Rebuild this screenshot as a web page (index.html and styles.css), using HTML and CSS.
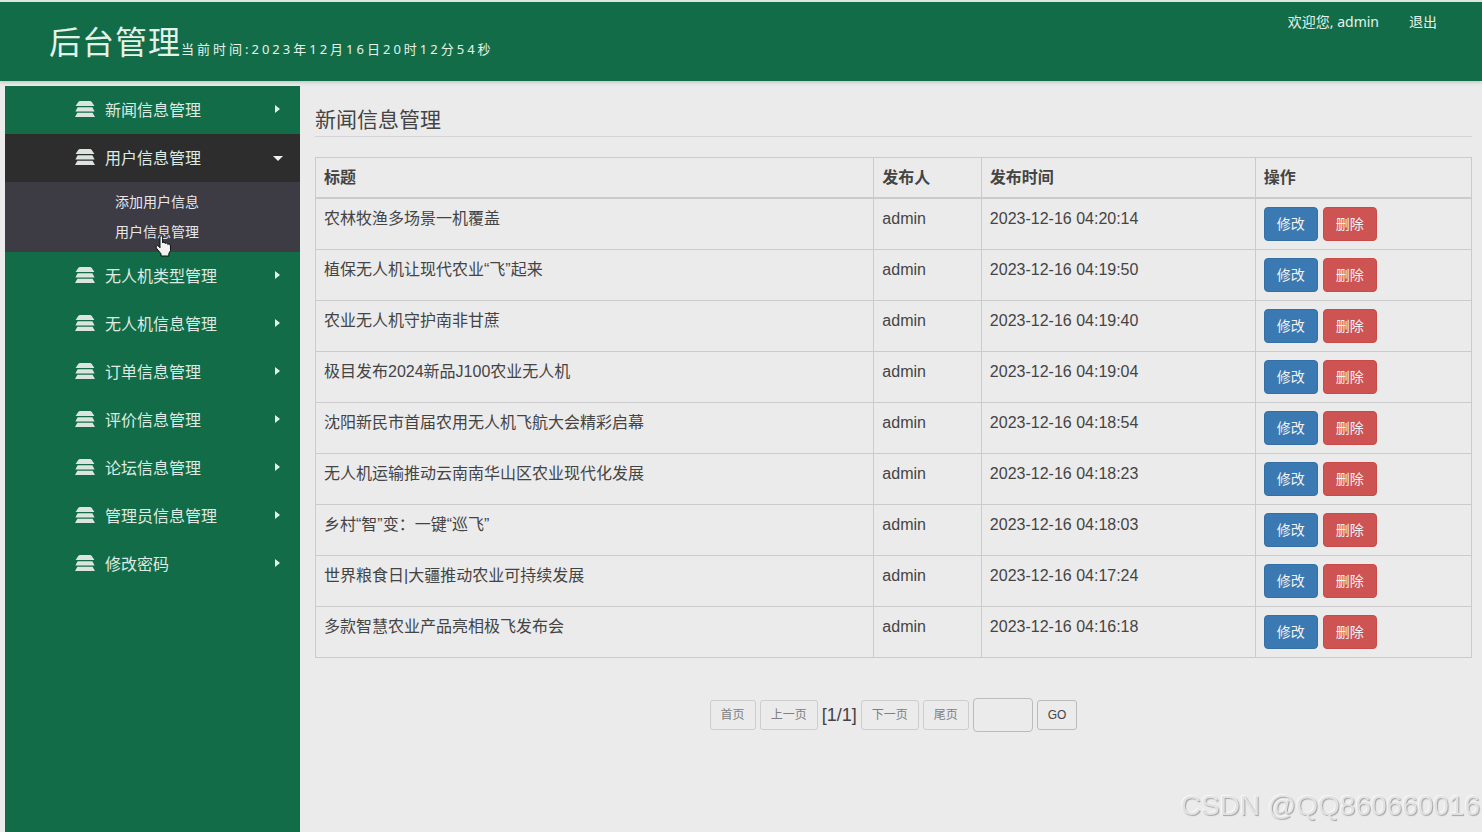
FILE: index.html
```html
<!DOCTYPE html>
<html lang="zh-CN">
<head>
  <meta charset="UTF-8">
  <meta name="viewport" content="width=device-width, initial-scale=1">
  <title>后台管理</title>
  <link rel="stylesheet" href="styles.css">
</head>
<body>

<svg class="defs" aria-hidden="true">
  <symbol id="stack" viewBox="0 0 20 16">
    <path d="M5 0h10Q16 0 16.600 .8L19.400 5H.6L3.400 .8Q4 0 5 0z M2.600 6.200h14.800L19.600 10.500H.4z M2.400 11.800h15.200L20 16H0z"/>
  </symbol>
</svg>

<header class="header">
  <h1 class="brand">后台管理</h1>
  <span class="clock">当前时间:2023年12月16日20时12分54秒</span>
  <div class="account">
    <span>欢迎您, admin</span>
    <a href="#">退出</a>
  </div>
</header>

<div class="layout">
  <nav class="sidebar">
    <ul class="menu">
      <li><a class="menu-item" href="#"><svg class="icon"><use href="#stack"/></svg>新闻信息管理<i class="caret"></i></a></li>
      <li>
        <a class="menu-item open" href="#"><svg class="icon"><use href="#stack"/></svg>用户信息管理<i class="caret"></i></a>
        <ul class="submenu">
          <li><a href="#">添加用户信息</a></li>
          <li>
            <a href="#">用户信息管理</a>
            <svg class="pointer" viewBox="0 0 17 22" aria-hidden="true">
              <path d="M5 2.2Q5 .8 6.3 .8T7.6 2.2V8Q8 7 9 7.2T10.2 8.6Q10.7 7.7 11.7 8T12.8 9.5Q13.3 8.8 14.3 9.2T15.5 11V15.5L13.8 18.5V21H6V18.8L1.3 13Q.6 11.8 1.6 11T3.6 11.3L5 12.8z"/>
            </svg>
          </li>
        </ul>
      </li>
      <li><a class="menu-item" href="#"><svg class="icon"><use href="#stack"/></svg>无人机类型管理<i class="caret"></i></a></li>
      <li><a class="menu-item" href="#"><svg class="icon"><use href="#stack"/></svg>无人机信息管理<i class="caret"></i></a></li>
      <li><a class="menu-item" href="#"><svg class="icon"><use href="#stack"/></svg>订单信息管理<i class="caret"></i></a></li>
      <li><a class="menu-item" href="#"><svg class="icon"><use href="#stack"/></svg>评价信息管理<i class="caret"></i></a></li>
      <li><a class="menu-item" href="#"><svg class="icon"><use href="#stack"/></svg>论坛信息管理<i class="caret"></i></a></li>
      <li><a class="menu-item" href="#"><svg class="icon"><use href="#stack"/></svg>管理员信息管理<i class="caret"></i></a></li>
      <li><a class="menu-item" href="#"><svg class="icon"><use href="#stack"/></svg>修改密码<i class="caret"></i></a></li>
    </ul>
  </nav>

  <main class="content">
    <h2 class="page-title">新闻信息管理</h2>

    <table class="news">
      <thead>
        <tr>
          <th class="col-title">标题</th>
          <th class="col-author">发布人</th>
          <th class="col-time">发布时间</th>
          <th class="col-action">操作</th>
        </tr>
      </thead>
      <tbody>
        <tr>
          <td>农林牧渔多场景一机覆盖</td>
          <td>admin</td>
          <td>2023-12-16 04:20:14</td>
          <td><div class="actions"><button class="btn edit">修改</button><button class="btn delete">删除</button></div></td>
        </tr>
        <tr>
          <td>植保无人机让现代农业“飞”起来</td>
          <td>admin</td>
          <td>2023-12-16 04:19:50</td>
          <td><div class="actions"><button class="btn edit">修改</button><button class="btn delete">删除</button></div></td>
        </tr>
        <tr>
          <td>农业无人机守护南非甘蔗</td>
          <td>admin</td>
          <td>2023-12-16 04:19:40</td>
          <td><div class="actions"><button class="btn edit">修改</button><button class="btn delete">删除</button></div></td>
        </tr>
        <tr>
          <td>极目发布2024新品J100农业无人机</td>
          <td>admin</td>
          <td>2023-12-16 04:19:04</td>
          <td><div class="actions"><button class="btn edit">修改</button><button class="btn delete">删除</button></div></td>
        </tr>
        <tr>
          <td>沈阳新民市首届农用无人机飞航大会精彩启幕</td>
          <td>admin</td>
          <td>2023-12-16 04:18:54</td>
          <td><div class="actions"><button class="btn edit">修改</button><button class="btn delete">删除</button></div></td>
        </tr>
        <tr>
          <td>无人机运输推动云南南华山区农业现代化发展</td>
          <td>admin</td>
          <td>2023-12-16 04:18:23</td>
          <td><div class="actions"><button class="btn edit">修改</button><button class="btn delete">删除</button></div></td>
        </tr>
        <tr>
          <td>乡村“智”变：一键“巡飞”</td>
          <td>admin</td>
          <td>2023-12-16 04:18:03</td>
          <td><div class="actions"><button class="btn edit">修改</button><button class="btn delete">删除</button></div></td>
        </tr>
        <tr>
          <td>世界粮食日|大疆推动农业可持续发展</td>
          <td>admin</td>
          <td>2023-12-16 04:17:24</td>
          <td><div class="actions"><button class="btn edit">修改</button><button class="btn delete">删除</button></div></td>
        </tr>
        <tr>
          <td>多款智慧农业产品亮相极飞发布会</td>
          <td>admin</td>
          <td>2023-12-16 04:16:18</td>
          <td><div class="actions"><button class="btn edit">修改</button><button class="btn delete">删除</button></div></td>
        </tr>
      </tbody>
    </table>

    <form class="pager">
      <button type="button" class="page-btn" disabled>首页</button>
      <button type="button" class="page-btn" disabled>上一页</button>
      <span>[1/1]</span>
      <button type="button" class="page-btn" disabled>下一页</button>
      <button type="button" class="page-btn" disabled>尾页</button>
      <input class="page-input" type="text" aria-label="页码">
      <button type="button" class="page-btn">GO</button>
    </form>
  </main>
</div>

<div class="watermark">CSDN @QQ860660016</div>

</body>
</html>
```
FILE: styles.css
```css
* {
  box-sizing: border-box;
  margin: 0;
  padding: 0;
}

body {
  display: flex;
  flex-direction: column;
  min-height: 100vh;
  font-family: "Liberation Sans", "Noto Sans CJK SC", sans-serif;
  font-size: 16px;
  line-height: 23px;
  color: #444;
  background-color: #ebebec;
}

ul {
  list-style: none;
}

a {
  color: inherit;
  text-decoration: none;
}

.defs {
  position: absolute;
  width: 0;
  height: 0;
}

/* header */
.header {
  display: flex;
  align-items: baseline;
  height: 81px;
  padding: 20px 45px 0 49px;
  border-top: 2px solid #dce7e2;
  background-color: #136c48;
  box-shadow: 0 1px 4px rgba(0, 60, 35, 0.25);
  color: #e4f3ea;
  font-family: "Noto Sans", "Noto Sans CJK SC", sans-serif;
}

.brand {
  font-size: 32px;
  font-weight: 400;
  line-height: 40px;
  letter-spacing: 1px;
}

.clock {
  font-size: 13px;
  letter-spacing: 3px;
}

.account {
  display: flex;
  align-self: flex-start;
  gap: 30px;
  margin-top: -12px;
  margin-left: auto;
  font-size: 14px;
}

.layout {
  display: flex;
  flex: 1;
  padding: 5px 10px 0 5px;
}

/* sidebar */
.sidebar {
  flex: none;
  width: 295px;
  background-color: #136c48;
  color: #dcebe3;
}

.menu-item {
  display: flex;
  align-items: center;
  height: 48px;
  padding: 0 17px 0 70px;
}

.menu-item.open {
  background-color: #2d2d2d;
}

.icon {
  width: 20px;
  height: 16px;
  margin-right: 10px;
  margin-bottom: 2px;
  fill: #dce4df;
}

.caret {
  margin-right: 3px;
  margin-bottom: 2px;
  margin-left: auto;
  border-top: 4px solid transparent;
  border-bottom: 4px solid transparent;
  border-left: 5px solid #e4f7ec;
}

.open .caret {
  margin-right: 0;
  margin-bottom: 0;
  border-top: 5px solid #f0f0f0;
  border-right: 5px solid transparent;
  border-bottom: 0;
  border-left: 5px solid transparent;
}

.submenu {
  padding: 5px 0;
  background-color: #3d3b44;
  color: #e8e8ea;
  font-size: 14px;
  line-height: 30px;
}

.submenu li {
  position: relative;
  padding-left: 110px;
}

.submenu a {
  display: block;
}

.pointer {
  position: absolute;
  top: 18px;
  left: 150px;
  z-index: 1;
  width: 17px;
  height: 22px;
  fill: #f2f2f2;
  stroke: #111;
  stroke-width: 1;
}

/* content */
.content {
  flex: 1;
  min-width: 0;
  padding: 20px 0 0 15px;
}

.page-title {
  padding-bottom: 2px;
  border-bottom: 1px solid #d5d5d7;
  margin-bottom: 20px;
  font-size: 21px;
  font-weight: 400;
  line-height: 28px;
}

.news {
  width: 100%;
  border-collapse: collapse;
  table-layout: fixed;
}

.news th,
.news td {
  padding: 8px;
  border: 1px solid #cbcbcd;
  text-align: left;
  vertical-align: top;
}

.news th {
  border-bottom-width: 2px;
}

.col-title {
  width: 48.3%;
}

.col-author {
  width: 9.3%;
}

.col-time {
  width: 23.7%;
}

.col-action {
  width: 18.7%;
}

.actions {
  display: flex;
  gap: 5px;
}

.btn {
  padding: 6px 12px;
  border: 1px solid transparent;
  border-radius: 4px;
  color: #f2f2f2;
  font-family: inherit;
  font-size: 14px;
  line-height: 20px;
  cursor: pointer;
}

.edit {
  border-color: #3470a5;
  background-color: #3a79b1;
}

.delete {
  border-color: #c94a47;
  background-color: #cd5452;
}

/* pager */
.pager {
  display: flex;
  align-items: center;
  justify-content: center;
  gap: 4px;
  margin-top: 40px;
  font-size: 18px;
}

.page-btn {
  padding: 5px 10px;
  border: 1px solid #bbb;
  border-radius: 3px;
  background-color: transparent;
  color: #444;
  font-family: inherit;
  font-size: 12px;
  line-height: 18px;
}

.page-btn:disabled {
  border-color: #cdcdcf;
  color: #808080;
}

.page-input {
  width: 60px;
  height: 34px;
  padding: 6px 12px;
  border: 1px solid #bbb;
  border-radius: 4px;
  background-color: transparent;
  font-size: 14px;
}

.watermark {
  position: fixed;
  right: 2px;
  bottom: 10px;
  color: #e2e2e3;
  font-size: 28px;
  line-height: 32px;
  text-shadow: 1px 1px 1px #a4a4a4, -1px -1px 1px #f8f8f8;
}
```
